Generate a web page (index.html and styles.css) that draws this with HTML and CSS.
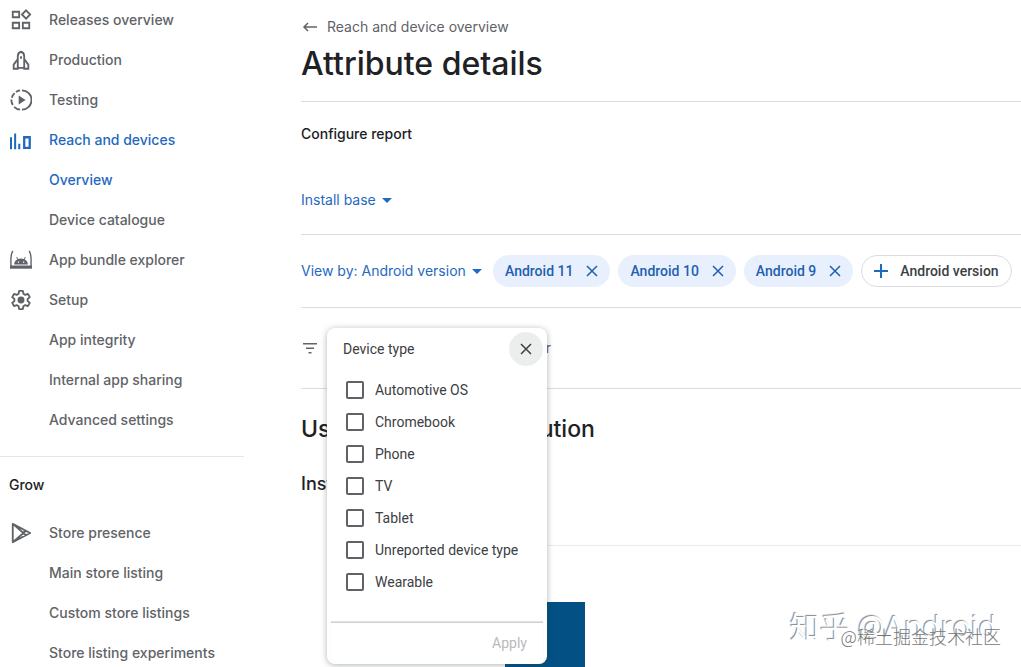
FILE: index.html
```html
<!DOCTYPE html>
<html lang="en">
<head>
    <meta charset="UTF-8">
    <meta name="viewport" content="width=device-width, initial-scale=1.0">
    <title>Attribute details</title>
    <link rel="stylesheet" href="styles.css">
</head>
<body>
    <!-- Side navigation -->
    <nav class="sidebar">
        <a href="#" class="nav-item">
            <svg class="nav-icon" viewBox="0 0 24 24" fill="none" stroke="currentColor" stroke-width="2"><path d="M3 3h7v6H3zM3 15h7v6H3zM14 15h7v6h-7zM17.500 1.500l4.500 4.500-4.500 4.500L13 6z"/></svg>
            <span>Releases overview</span>
        </a>
        <a href="#" class="nav-item">
            <svg class="nav-icon" viewBox="0 0 24 24" fill="none" stroke="currentColor" stroke-width="2"><path d="M8.500 20V8c0-2.500 1.500-4.500 3.500-5 2 .5 3.500 2.500 3.500 5v12M8.500 11L4 17v4.500h4.500V17M15.500 11l4.500 6v4.500h-4.500V17M8.500 20.500h7M12 8v2.500"/></svg>
            <span>Production</span>
        </a>
        <a href="#" class="nav-item">
            <svg class="nav-icon" viewBox="0 0 24 24" fill="none" stroke="currentColor" stroke-width="2"><path d="M13 1.500a10.500 10.500 0 0 1 0 21M11 1.500a10.500 10.500 0 0 0-4.500 1.700M5 4.500a10.500 10.500 0 0 0-3 5M1.500 11.500a10.500 10.500 0 0 0 1.500 6M4.500 19.500a10.500 10.500 0 0 0 6.500 3"/><path d="M9.500 7v10l7.500-5z" fill="currentColor" stroke="none"/></svg>
            <span>Testing</span>
        </a>
        <a href="#" class="nav-item active">
            <svg class="nav-icon" viewBox="0 0 24 24" fill="currentColor"><path d="M0 9h2.200v13H0zM4.500 5h2.200v17H4.500zM9 16h2.200v6H9z"/><path d="M15.500 9h6v11.500h-6z" fill="none" stroke="currentColor" stroke-width="2.500"/></svg>
            <span>Reach and devices</span>
        </a>
        <a href="#" class="nav-item sub active">Overview</a>
        <a href="#" class="nav-item sub">Device catalogue</a>
        <a href="#" class="nav-item">
            <svg class="nav-icon" viewBox="0 0 24 24" fill="currentColor"><path d="M3 2C1.500 5 1 7 1 11v9h22v-9c0-4-.5-6-2-9" fill="none" stroke="currentColor" stroke-width="1.500"/><path d="M0 18h24v3.500H0z"/><path fill-rule="evenodd" d="M4.500 17c.2-2.600 1.500-4.600 3.600-5.700L6.800 9l.8-.5L9 10.900a9 9 0 0 1 6 0l1.400-2.400.8.5-1.300 2.300c2.100 1.100 3.400 3.100 3.600 5.700zM8.500 13.500v1.400h1.400v-1.400zM14.100 13.500v1.400h1.400v-1.400z"/></svg>
            <span>App bundle explorer</span>
        </a>
        <a href="#" class="nav-item">
            <svg class="nav-icon" viewBox="0 0 24 24" fill="none" stroke="currentColor" stroke-width="2" stroke-linejoin="round"><path d="M10 2h4l.6 3.200 2 1.200 3-1 2 3.500-2.400 2v2.200l2.400 2-2 3.500-3-1-2 1.200L14 22h-4l-.6-3.200-2-1.200-3 1-2-3.500 2.400-2v-2.200l-2.400-2 2-3.500 3 1 2-1.200z"/><circle cx="12" cy="12" r="3.800" fill="currentColor" stroke="none"/></svg>
            <span>Setup</span>
        </a>
        <a href="#" class="nav-item sub">App integrity</a>
        <a href="#" class="nav-item sub">Internal app sharing</a>
        <a href="#" class="nav-item sub">Advanced settings</a>

        <h2 class="nav-heading">Grow</h2>
        <a href="#" class="nav-item">
            <svg class="nav-icon" viewBox="0 0 24 24" fill="none" stroke="currentColor" stroke-width="2" stroke-linejoin="round"><path d="M3 2l19 10L3 22zM3 2l14.500 12.500M3 22L17.500 9.500M17 9.500L14 12l3 2.500"/></svg>
            <span>Store presence</span>
        </a>
        <a href="#" class="nav-item sub">Main store listing</a>
        <a href="#" class="nav-item sub">Custom store listings</a>
        <a href="#" class="nav-item sub">Store listing experiments</a>
    </nav>

    <main class="content">
        <header class="page-header">
            <a href="#" class="back-link">
                <svg class="back-icon" viewBox="0 0 18 18" fill="none" stroke="currentColor" stroke-width="1.500"><path d="M16 9H3M7 5L3 9l4 4"/></svg>
                Reach and device overview
            </a>
            <h1>Attribute details</h1>
        </header>

        <section class="configure">
            <h2>Configure report</h2>
            <label class="dropdown">
                <select aria-label="Metric">
                    <option>Install base</option>
                </select>
                <svg class="caret" viewBox="0 0 10 5"><path d="M0 0h10L5 5z"/></svg>
            </label>
        </section>

        <section class="view-by">
            <label class="dropdown">
                <select aria-label="View by">
                    <option>View by: Android version</option>
                </select>
                <svg class="caret" viewBox="0 0 10 5"><path d="M0 0h10L5 5z"/></svg>
            </label>
            <div class="chips">
                <button class="chip">Android 11 <svg class="chip-icon" viewBox="0 0 12 12"><path d="M1 1l10 10M11 1L1 11"/></svg></button>
                <button class="chip">Android 10 <svg class="chip-icon" viewBox="0 0 12 12"><path d="M1 1l10 10M11 1L1 11"/></svg></button>
                <button class="chip">Android 9 <svg class="chip-icon" viewBox="0 0 12 12"><path d="M1 1l10 10M11 1L1 11"/></svg></button>
                <button class="chip add"><svg class="add-icon" viewBox="0 0 14 14"><path d="M7 0v14M0 7h14"/></svg> Android version</button>
            </div>
        </section>

        <section class="filters">
            <svg class="filter-icon" viewBox="0 0 18 18"><path d="M2 4h14v1.500H2zM5 8.500h8V10H5zM7.500 13h3v1.500h-3z"/></svg>
            <span class="filter-label">Filter</span>

            <!-- Device type popup -->
            <form class="popup">
                <div class="popup-header">
                    <h3>Device type</h3>
                    <button type="button" class="close" aria-label="Close"><svg viewBox="0 0 12 12"><path d="M1 1l10 10M11 1L1 11"/></svg></button>
                </div>
                <div class="options">
                    <label><input type="checkbox"> Automotive OS</label>
                    <label><input type="checkbox"> Chromebook</label>
                    <label><input type="checkbox"> Phone</label>
                    <label><input type="checkbox"> TV</label>
                    <label><input type="checkbox"> Tablet</label>
                    <label><input type="checkbox"> Unreported device type</label>
                    <label><input type="checkbox"> Wearable</label>
                </div>
                <div class="popup-footer">
                    <button type="button" class="apply" disabled>Apply</button>
                </div>
            </form>
        </section>

        <section class="report">
            <h2>User and issue distribution</h2>
            <h3>Install base</h3>
            <div class="chart">
                <div class="bar"></div>
            </div>
        </section>
    </main>

    <div class="mark mark-large">知乎 @Android</div>
    <div class="mark mark-small">@稀土掘金技术社区</div>
</body>
</html>
```

FILE: styles.css
```css
* {
    box-sizing: border-box;
}
body {
    display: flex;
    position: relative;
    margin: 0;
    height: 100vh;
    overflow: hidden;
    background: #fff;
    color: #202124;
    font-family: Inter, "Liberation Sans", sans-serif;
    font-size: 14px;
    line-height: 20px;
}
h1, h2, h3 {
    margin: 0;
    font-weight: 500;
}
a {
    color: inherit;
    text-decoration: none;
}
button, select {
    border: none;
    background: none;
    padding: 0;
    font: inherit;
    color: inherit;
    cursor: pointer;
}

/* Side navigation */
.sidebar {
    flex: none;
    width: 244px;
    overflow: hidden;
    color: #5f6368;
    font-weight: 500;
}
.nav-item {
    display: flex;
    align-items: center;
    gap: 17px;
    height: 40px;
    padding-left: 10px;
}
.nav-item.sub {
    padding-left: 49px;
}
.nav-item.active {
    color: #1f69c0;
}
.nav-icon {
    width: 22px;
    height: 22px;
}
.nav-heading {
    margin-top: 16px;
    padding: 18px 9px;
    border-top: 1px solid #e4e6e8;
    color: #202124;
    font-size: 14px;
}

/* Main column */
.content {
    flex: 1;
    margin-left: 57px;
    overflow: hidden;
}
.page-header {
    padding: 16px 0 17px;
    border-bottom: 1px solid #dadce0;
}
.back-link {
    display: flex;
    align-items: center;
    gap: 8px;
    line-height: 22px;
    color: #5f6368;
}
.back-icon {
    width: 18px;
    height: 18px;
}
h1 {
    margin-top: 6px;
    font-size: 32px;
    line-height: 40px;
}
.configure {
    padding: 22px 0 24px;
    border-bottom: 1px solid #dadce0;
}
.configure h2 {
    margin-bottom: 46px;
    font-size: 14px;
}
.dropdown {
    display: flex;
    align-items: center;
    gap: 6px;
    color: #1f69c0;
}
.dropdown select {
    appearance: none;
    height: 20px;
}
.caret {
    width: 10px;
    height: 5px;
    fill: currentColor;
}
.view-by {
    display: flex;
    gap: 11px;
    padding: 20px 0;
    border-bottom: 1px solid #dadce0;
    white-space: nowrap;
}
.chips {
    display: flex;
    gap: 8px;
}
.chip {
    display: flex;
    align-items: center;
    gap: 13px;
    height: 32px;
    padding: 0 12px;
    border-radius: 16px;
    background: #e8f0fe;
    color: #1f5fb0;
    font-family: Roboto, sans-serif;
    font-weight: 500;
}
.chip-icon {
    width: 12px;
    height: 12px;
    stroke: currentColor;
    stroke-width: 1.500;
}
.chip.add {
    gap: 12px;
    border: 1px solid #dadce0;
    background: #fff;
    color: #3c4043;
}
.add-icon {
    width: 14px;
    height: 14px;
    stroke: #1f69c0;
    stroke-width: 2;
}
.filters {
    display: flex;
    align-items: center;
    position: relative;
    height: 81px;
    border-bottom: 1px solid #dadce0;
    color: #5f6368;
}
.filter-icon {
    width: 18px;
    height: 18px;
    fill: currentColor;
}
.filter-label {
    width: 232px;
    text-align: right;
}

/* Device type popup */
.popup {
    position: absolute;
    top: 20px;
    left: 26px;
    z-index: 1;
    width: 220px;
    border-radius: 8px;
    background: #fff;
    box-shadow: 0 1px 6px rgba(60, 64, 67, 0.4);
    color: #3c4043;
    font-family: Roboto, sans-serif;
}
.popup-header {
    display: flex;
    align-items: center;
    justify-content: space-between;
    padding: 4px 4px 4px 16px;
}
.popup-header h3 {
    font-size: 14px;
    font-weight: 400;
}
.close {
    display: flex;
    align-items: center;
    justify-content: center;
    width: 34px;
    height: 34px;
    border-radius: 50%;
    background: #eceeee;
}
.close svg {
    width: 12px;
    height: 12px;
    stroke: currentColor;
    stroke-width: 1.500;
}
.options {
    padding: 4px 0 24px 19px;
}
.options label {
    display: flex;
    align-items: center;
    gap: 11px;
    height: 32px;
}
.options input {
    appearance: none;
    width: 18px;
    height: 18px;
    margin: 0;
    border: 2px solid #5f6368;
    border-radius: 2px;
}
.popup-footer {
    display: flex;
    justify-content: flex-end;
    margin: 0 4px;
    padding: 10px 16px 11px;
    border-top: 1px solid #d0d0d0;
    box-shadow: 0 -1px 1px rgba(0, 0, 0, 0.1);
}
.apply {
    color: #b8babc;
    cursor: default;
}

/* Report */
.report {
    padding-top: 24px;
}
.report h2 {
    font-size: 23px;
    line-height: 32px;
}
.report h3 {
    margin-top: 27px;
    font-size: 18px;
    line-height: 24px;
}
.chart {
    margin: 49px 0 0 40px;
    padding: 56px 0 0 164px;
    border-top: 1px solid #e8eaed;
}
.bar {
    width: 80px;
    height: 65px;
    background: #025084;
}

/* Watermarks */
.mark {
    position: absolute;
    white-space: nowrap;
    font-family: "Noto Sans", "Noto Sans CJK SC", sans-serif;
}
.mark-large {
    right: 24px;
    bottom: 20px;
    color: #fff;
    font-size: 30px;
    line-height: 40px;
    text-shadow: -1px -1px 1px #888;
}
.mark-small {
    right: 20px;
    bottom: 19px;
    color: #777;
    font-family: "Noto Sans CJK SC", sans-serif;
    font-size: 18px;
    font-weight: 300;
    line-height: 24px;
}
```
